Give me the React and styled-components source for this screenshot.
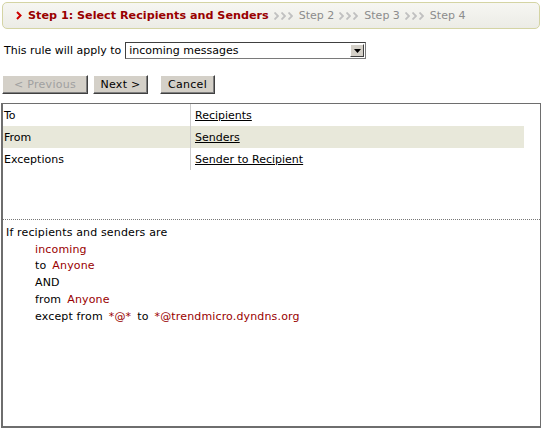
import React from "react";
import styled, { createGlobalStyle } from "styled-components";

const GlobalStyle = createGlobalStyle`
  html, body {
    margin: 0;
    padding: 0;
    background: #ffffff;
  }
  body {
    font-family: "DejaVu Sans", Verdana, sans-serif;
    font-size: 11px;
    color: #000000;
  }
`;

const Page = styled.div`
  width: 542px;
  height: 429px;
  display: flex;
  flex-direction: column;
  box-sizing: border-box;
  padding: 2px 1px 1px 1px;
`;

const StepBar = styled.div`
  margin: 0 1px;
  height: 27px;
  box-sizing: border-box;
  border: 1px solid #d4d4a4;
  border-radius: 5px;
  background: linear-gradient(#f6f6f2, #ecece6);
  display: flex;
  align-items: center;
  padding-left: 13px;
  white-space: nowrap;
`;

const Chevron = styled.svg`
  width: 6px;
  height: 9px;
  margin-right: 6px;
  flex: none;
`;

const CurrentStep = styled.span`
  color: #990000;
  font-weight: bold;
  font-size: 11.2px;
`;

const NextStep = styled.span`
  color: #8c8c8c;
  font-size: 11px;
`;

const Arrows = styled.span`
  display: inline-flex;
  gap: 2px;
  margin: 0 6px 0 5px;
  svg {
    width: 5px;
    height: 8px;
  }
`;

const ApplyRow = styled.div`
  display: flex;
  align-items: center;
  margin-top: 13px;
  padding-left: 3px;
  gap: 4px;
`;

const Select = styled.div`
  width: 241px;
  height: 17px;
  box-sizing: border-box;
  border: 1px solid #7a7a7a;
  border-top-color: #404040;
  border-left-color: #404040;
  display: flex;
  align-items: center;
  padding-left: 3px;
  background: #fff;
`;

const SelectText = styled.span`
  flex: 1;
`;

const SelectButton = styled.div`
  width: 14px;
  height: 13px;
  margin-right: 1px;
  box-sizing: border-box;
  background: #d4d0c8;
  border: 1px solid;
  border-color: #ffffff #404040 #404040 #ffffff;
  display: flex;
  align-items: center;
  justify-content: center;
`;

const Buttons = styled.div`
  display: flex;
  margin-top: 16px;
  padding-left: 1px;
  gap: 5px;
`;

const Button = styled.button`
  font-family: "DejaVu Sans", Verdana, sans-serif;
  font-size: 11px;
  height: 19px;
  padding: 0;
  width: ${(p) => p.w}px;
  margin-left: ${(p) => p.gap || 0}px;
  background: #d4d0c8;
  color: ${(p) => (p.disabled ? "#a0a0a0" : "#000")};
  border: 1px solid;
  border-color: #ffffff #404040 #404040 #ffffff;
  box-shadow: inset -1px -1px 0 #808080;
  letter-spacing: 0.3px;
`;

const Panel = styled.div`
  margin-top: 9px;
  flex: 1;
  border: 2px solid #6e6e6e;
  border-top-width: 1px;
  border-right-width: 1px;
  display: flex;
  flex-direction: column;
`;

const Criteria = styled.div`
  width: 521px;
  height: 115px;
  display: flex;
  flex-direction: column;
  box-sizing: border-box;
`;

const Row = styled.div`
  display: grid;
  grid-template-columns: 188px 1fr;
  height: 22px;
  background: ${(p) => (p.shaded ? "#e8e8da" : "transparent")};
`;

const Label = styled.div`
  display: flex;
  align-items: center;
  padding-left: 1px;
  border-right: 1px solid #cccccc;
`;

const Value = styled.div`
  display: flex;
  align-items: center;
  padding-left: 4px;
`;

const Link = styled.a`
  color: #000;
  text-decoration: underline;
`;

const Summary = styled.div`
  border-top: 1px dotted #777;
  padding: 4px 3px;
  display: flex;
  flex-direction: column;
  letter-spacing: 0.15px;
`;

const Line = styled.div`
  height: 16.8px;
  display: flex;
  align-items: center;
  gap: 6px;
  padding-left: ${(p) => (p.indent ? 29 : 0)}px;
`;

const Red = styled.span`
  color: #990000;
`;

function Arrow({ color }) {
  return (
    <svg viewBox="0 0 5 8">
      <path d="M0.5 0.5 L4 4 L0.5 7.5" stroke={color} strokeWidth="1.8" fill="none" />
    </svg>
  );
}

function Sep() {
  return (
    <Arrows>
      <Arrow color="#c0c0c0" />
      <Arrow color="#c0c0c0" />
      <Arrow color="#c0c0c0" />
    </Arrows>
  );
}

export default function App() {
  return (
    <>
      <GlobalStyle />
      <Page>
        <StepBar>
          <Chevron viewBox="0 0 6 9">
            <path d="M1 1 L4.5 4.5 L1 8" stroke="#cc0000" strokeWidth="2" fill="none" />
          </Chevron>
          <CurrentStep>Step 1: Select Recipients and Senders</CurrentStep>
          <Sep />
          <NextStep>Step 2</NextStep>
          <Sep />
          <NextStep>Step 3</NextStep>
          <Sep />
          <NextStep>Step 4</NextStep>
        </StepBar>

        <ApplyRow>
          <span>This rule will apply to</span>
          <Select>
            <SelectText>incoming messages</SelectText>
            <SelectButton>
              <svg width="7" height="4" viewBox="0 0 7 4">
                <path d="M0 0 H7 L3.5 4 Z" fill="#000" />
              </svg>
            </SelectButton>
          </Select>
        </ApplyRow>

        <Buttons>
          <Button w={86} disabled>&lt; Previous</Button>
          <Button w={55}>Next &gt;</Button>
          <Button w={55} gap={7}>Cancel</Button>
        </Buttons>

        <Panel>
          <Criteria>
            <Row>
              <Label>To</Label>
              <Value><Link>Recipients</Link></Value>
            </Row>
            <Row shaded>
              <Label>From</Label>
              <Value><Link>Senders</Link></Value>
            </Row>
            <Row>
              <Label>Exceptions</Label>
              <Value><Link>Sender to Recipient</Link></Value>
            </Row>
          </Criteria>
          <Summary>
            <Line>If recipients and senders are</Line>
            <Line indent><Red>incoming</Red></Line>
            <Line indent>to <Red>Anyone</Red></Line>
            <Line indent>AND</Line>
            <Line indent>from <Red>Anyone</Red></Line>
            <Line indent>except from <Red>*@*</Red> to <Red>*@trendmicro.dyndns.org</Red></Line>
          </Summary>
        </Panel>
      </Page>
    </>
  );
}
